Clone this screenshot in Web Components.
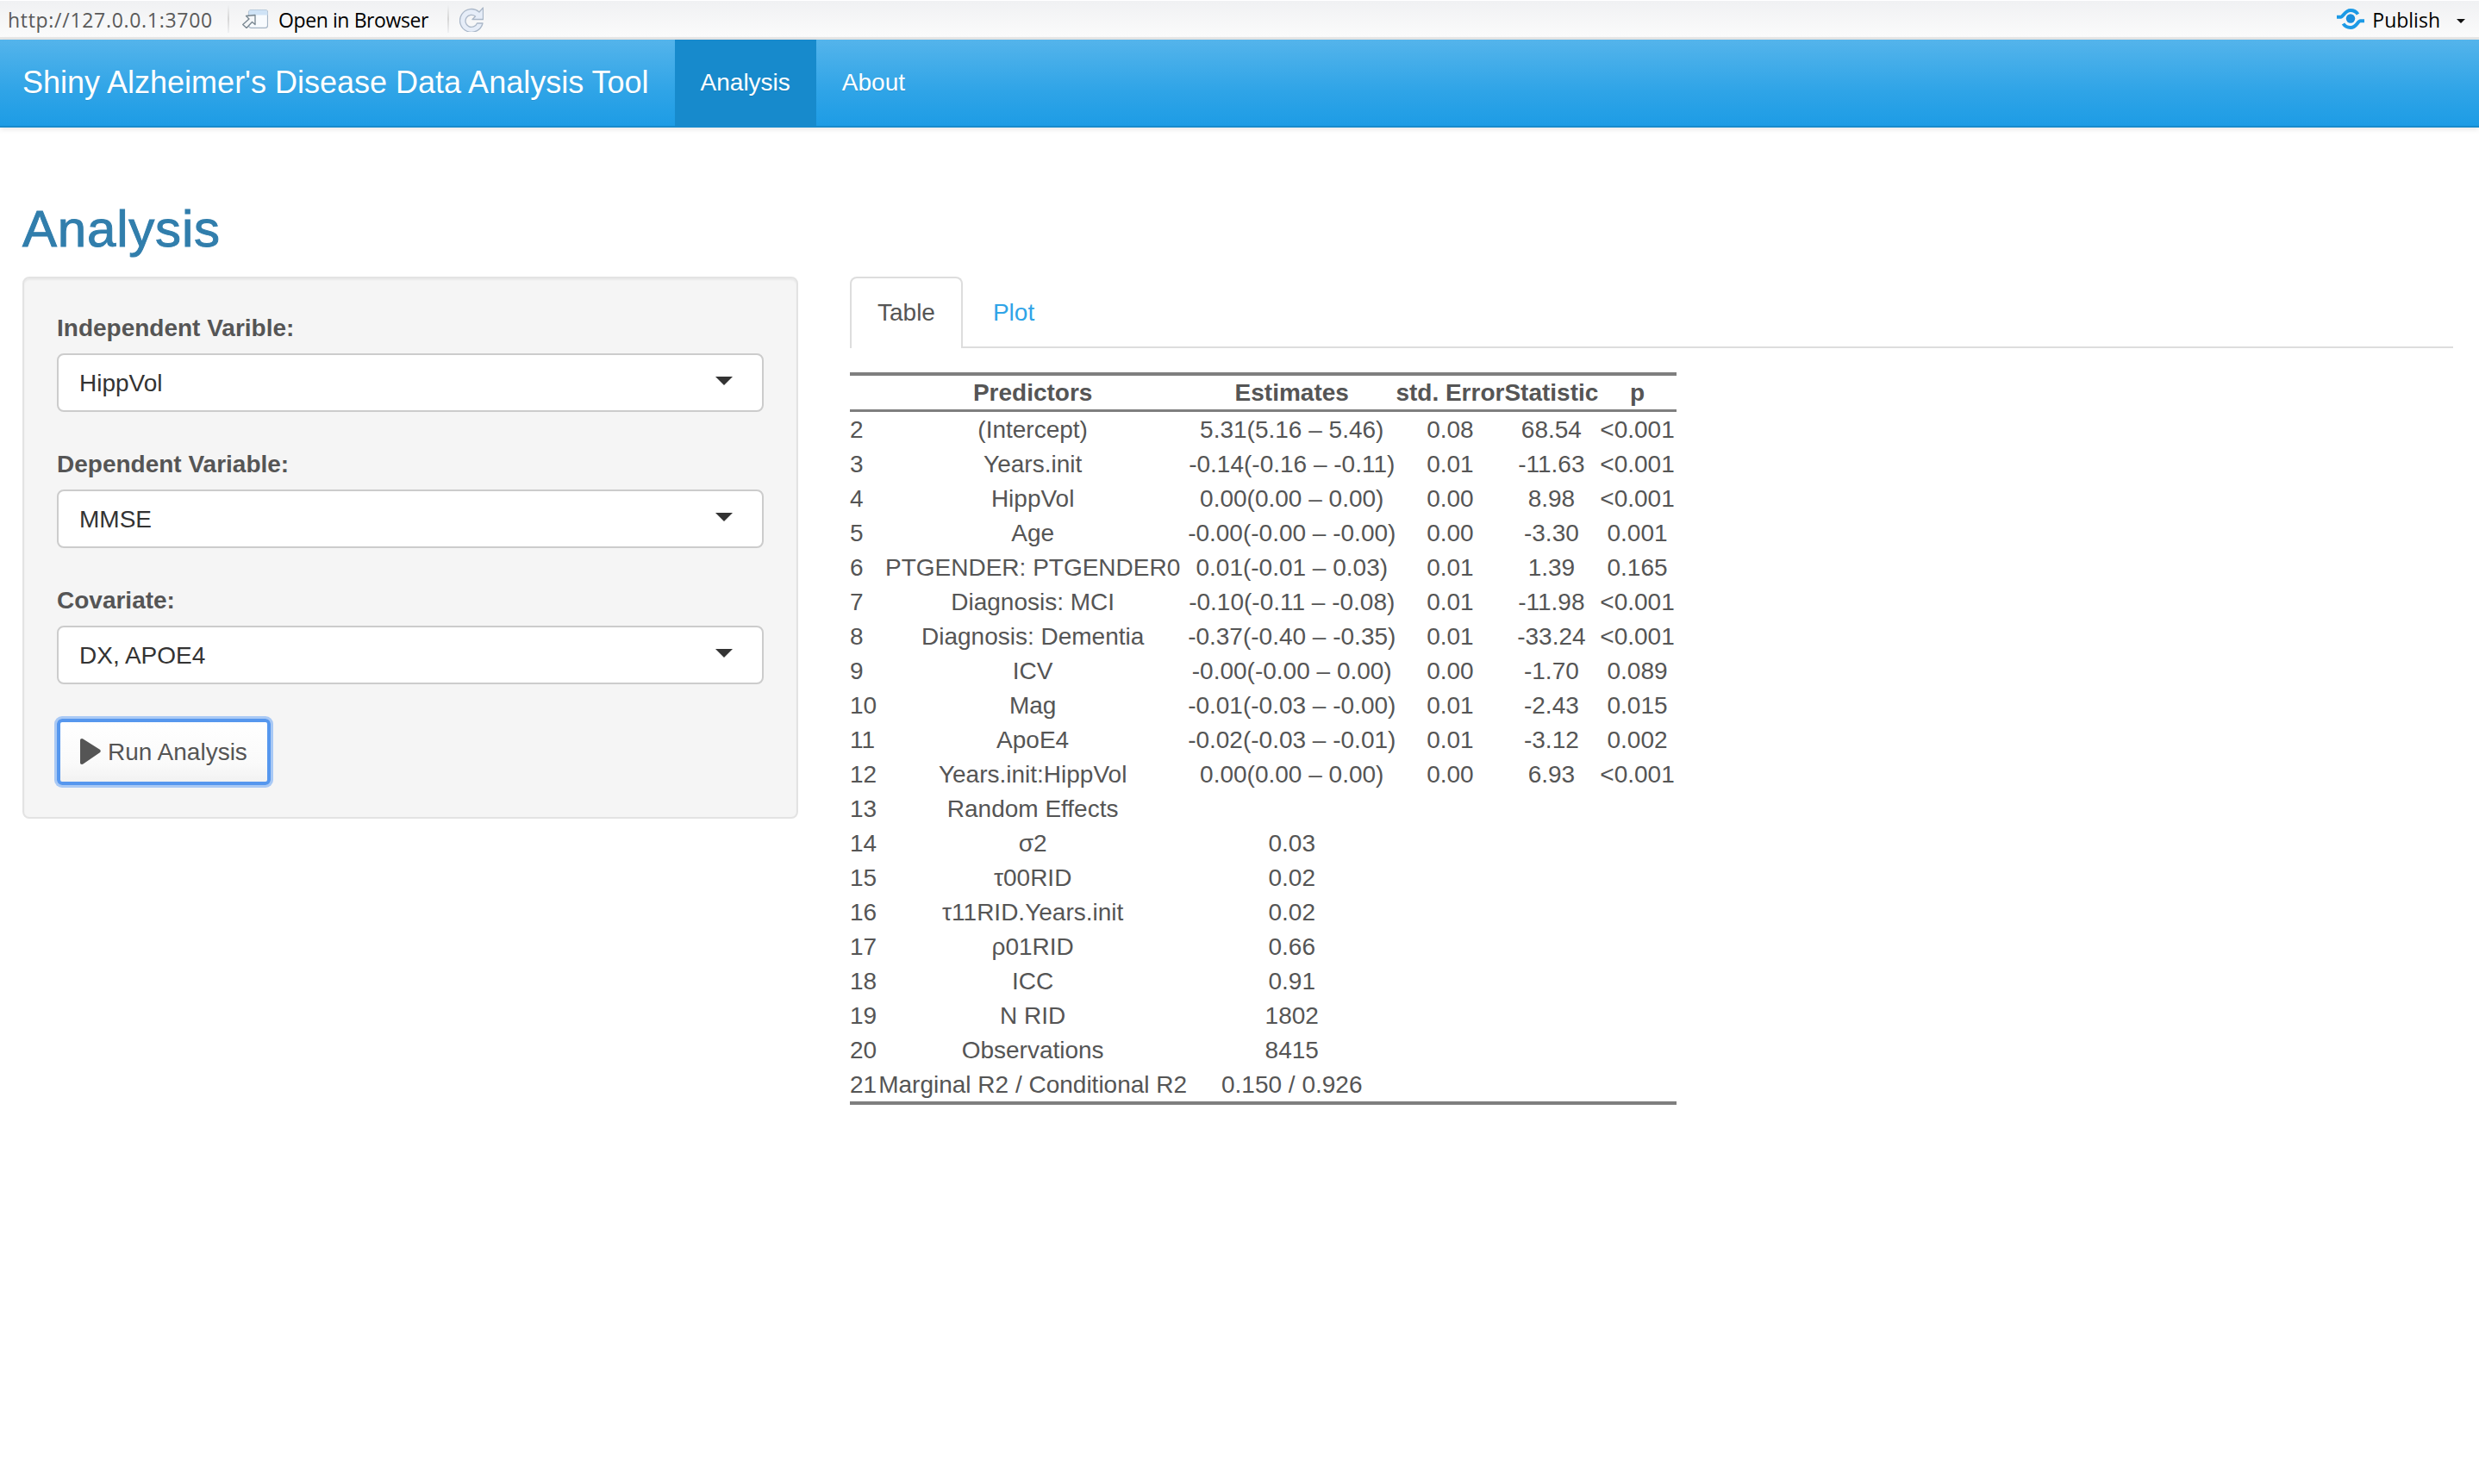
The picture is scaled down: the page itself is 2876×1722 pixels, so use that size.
<!DOCTYPE html>
<html>
<head>
<meta charset="utf-8">
<title>Shiny Alzheimer's Disease Data Analysis Tool</title>
<style>
    html, body { margin: 0; padding: 0; background: #fff; }
    body { font: 28px/40px "Liberation Sans", Arial, sans-serif; color: #555; }
</style>
</head>
<body>
<ide-toolbar url="http://127.0.0.1:3700"></ide-toolbar>
<app-navbar brand="Shiny Alzheimer's Disease Data Analysis Tool">
    <nav-item active>Analysis</nav-item>
    <nav-item>About</nav-item>
</app-navbar>
<app-page heading="Analysis">
    <well-panel slot="side">
        <select-input label="Independent Varible:" value="HippVol"></select-input>
        <select-input label="Dependent Variable:" value="MMSE"></select-input>
        <select-input label="Covariate:" value="DX, APOE4"></select-input>
        <run-button>Run Analysis</run-button>
    </well-panel>
    <tab-set slot="main" active="Table" other="Plot">
        <model-table></model-table>
    </tab-set>
</app-page>

<script>
customElements.define('ide-toolbar',
    class ideToolbar extends HTMLElement {
        constructor() {
            super()
            this.attachShadow({ mode: 'open' })
            this.shadowRoot.innerHTML = String.raw`
            <style>
                :host{
                    display: flex;
                    align-items: center;
                    height: 42px;
                    border-top: 1px solid #fff;
                    border-bottom: 3px solid #e7e7e7;
                    background: linear-gradient(#f0f1f3, #fbfbfb);
                    font: 23px/40px "Open Sans", "DejaVu Sans", sans-serif;
                    color: #000;
                }
                .url{ color: #5a5a5a; margin-left: 9px; width: 255px; padding-top: 2px; letter-spacing: .7px; }
                .sep{ width: 2px; height: 32px; background: linear-gradient(#f0f1f3, #d6d6d6, #f0f1f3); }
                .open{ display: flex; align-items: center; margin-left: 15px; width: 238px; }
                .open svg{ margin-right: 12px; }
                .open span{ padding-top: 2px; letter-spacing: -.4px; }
                .refresh{ margin-left: 12px; }
                .spacer{ flex: 1; }
                .publish{ display: flex; align-items: center; margin-right: 16px; }
                .publish svg{ margin-right: 9px; }
                .publish span:first-of-type{ padding-top: 2px; }
                .caret{ margin-left: 19px; border-style: solid; border-width: 5px 5px 0; border-color: #111 transparent transparent; margin-top: 4px; }
            </style>
            <span class="url"></span>
            <span class="sep"></span>
            <span class="open">
                <svg width="30" height="22" viewBox="0 0 30 22">
                    <rect x="7.500" y=".6" width="22" height="20.800" rx="3" fill="#f8fbfe" stroke="#a4b4c4" stroke-width="1.200"/>
                    <path d="M7.500 6.500V3.600a3 3 0 0 1 3-3h16a3 3 0 0 1 3 3v2.900z" fill="#cfe3f6"/>
                    <path d="M15 6.500 4.500 7.500 8 11 .7 17.500 5 21.500l6.500-7 3.500 3z" fill="#f4f6f8" stroke="#77858f" stroke-width="1.300" stroke-linejoin="round"/>
                </svg><span>Open in Browser</span></span>
            <span class="sep"></span>
            <span class="refresh">
                <svg width="28" height="29" viewBox="0 0 28 29" style="display:block">
                    <path d="M23 6A13.400 13.400 0 1 0 27 19H20.500A7 7 0 1 1 18.500 11L15 14.500H27.500V1z" fill="#e6edf8" stroke="#aab7c8" stroke-width="1.300" stroke-linejoin="round"/>
                </svg>
            </span>
            <span class="spacer"></span>
            <span class="publish">
                <svg width="32" height="24" viewBox="0 0 32 24">
                    <circle cx="16" cy="11.500" r="5.200" fill="#1c8fdd"/>
                    <path d="M0 9.700h4.500C8 9.700 9 2 16 2c3.500 0 6.500 1.400 8.500 4.500" fill="none" stroke="#1c9ae6" stroke-width="4"/>
                    <path d="M32 14.300h-4.500C24 14.300 23 22 16 22c-3.500 0-6.500-1.400-8.500-4.500" fill="none" stroke="#1c9ae6" stroke-width="4"/>
                </svg><span>Publish</span><span class="caret"></span></span>
            `
            this.shadowRoot.querySelector('.url').textContent = this.getAttribute('url')
        }
    })

customElements.define('nav-item',
    class navItem extends HTMLElement {
        constructor() {
            super()
            this.attachShadow({ mode: 'open' })
            this.shadowRoot.innerHTML = String.raw`
            <style>
                :host{
                    display: block;
                    padding: 30px 30px 30px;
                    line-height: 40px;
                    color: #fff;
                    text-shadow: 0 1px 0 rgba(0,0,0,.1);
                }
                :host([active]){ background: #178acc; }
            </style>
            <slot></slot>
            `
        }
    })

customElements.define('app-navbar',
    class appNavbar extends HTMLElement {
        constructor() {
            super()
            this.attachShadow({ mode: 'open' })
            this.shadowRoot.innerHTML = String.raw`
            <style>
                :host{
                    display: flex;
                    height: 100px;
                    padding-left: 26px;
                    background: linear-gradient(#54b4eb, #2fa4e7 60%, #1d9ce5);
                    border-bottom: 2px solid #178acc;
                    box-shadow: 0 2px 6px rgba(0,0,0,.1);
                    font-size: 28px;
                }
                .brand{
                    color: #fff;
                    font-size: 36px;
                    line-height: 54px;
                    padding: 23px 30px 23px 0;
                    text-shadow: 0 1px 0 rgba(0,0,0,.1);
                }
            </style>
            <span class="brand"></span>
            <slot></slot>
            `
            this.shadowRoot.querySelector('.brand').textContent = this.getAttribute('brand')
        }
    })

customElements.define('app-page',
    class appPage extends HTMLElement {
        constructor() {
            super()
            this.attachShadow({ mode: 'open' })
            this.shadowRoot.innerHTML = String.raw`
            <style>
                :host{
                    display: block;
                    padding: 0 30px 0 26px;
                }
                h2{
                    margin: 0;
                    padding-top: 82px;
                    height: 91px;
                    color: #317eac;
                    font-size: 60px;
                    line-height: 72px;
                    font-weight: 400;
                    -webkit-text-stroke: 1px #317eac;
                    letter-spacing: .8px;
                }
                .row{
                    display: grid;
                    grid-template-columns: 900px 1fr;
                    gap: 60px;
                }
            </style>
            <h2></h2>
            <div class="row">
                <slot name="side"></slot>
                <slot name="main"></slot>
            </div>
            `
            this.shadowRoot.querySelector('h2').textContent = this.getAttribute('heading')
        }
    })

customElements.define('well-panel',
    class wellPanel extends HTMLElement {
        constructor() {
            super()
            this.attachShadow({ mode: 'open' })
            this.shadowRoot.innerHTML = String.raw`
            <style>
                :host{
                    display: flex;
                    flex-direction: column;
                    align-items: flex-start;
                    align-self: start;
                    gap: 42px;
                    box-sizing: border-box;
                    width: 900px;
                    height: 629px;
                    padding: 39px 38px 0;
                    background: #f5f5f5;
                    border: 2px solid #e3e3e3;
                    border-radius: 8px;
                    box-shadow: inset 0 2px 2px rgba(0,0,0,.05);
                }
            </style>
            <slot></slot>
            `
        }
    })

customElements.define('select-input',
    class selectInput extends HTMLElement {
        constructor() {
            super()
            this.attachShadow({ mode: 'open' })
            this.shadowRoot.innerHTML = String.raw`
            <style>
                :host{ display: block; width: 820px; }
                label{
                    display: block;
                    height: 48px;
                    font-weight: 700;
                    line-height: 38px;
                    color: #555;
                }
                .box{
                    display: flex;
                    align-items: center;
                    justify-content: space-between;
                    box-sizing: border-box;
                    height: 68px;
                    padding: 0 34px 0 24px;
                    background: #fff;
                    border: 2px solid #ccc;
                    border-radius: 8px;
                    color: #333;
                }
                .value{ padding-top: 2px; }
                .caret{
                    border-style: solid;
                    border-width: 10px 10px 0;
                    border-color: #333 transparent transparent;
                    margin-top: -4px;
                }
            </style>
            <label></label>
            <div class="box"><span class="value"></span><span class="caret"></span></div>
            `
            this.shadowRoot.querySelector('label').textContent = this.getAttribute('label')
            this.shadowRoot.querySelector('.value').textContent = this.getAttribute('value')
        }
    })

customElements.define('run-button',
    class runButton extends HTMLElement {
        constructor() {
            super()
            this.attachShadow({ mode: 'open' })
            this.shadowRoot.innerHTML = String.raw`
            <style>
                :host{
                    display: flex;
                    align-items: center;
                    box-sizing: border-box;
                    width: 248px;
                    height: 77px;
                    margin-top: -2px;
                    padding: 0 20px 0 22px;
                    gap: 7px;
                    background: linear-gradient(#fff, #fafafa 70%, #f2f2f2);
                    border: 4px solid #5697ee;
                    border-radius: 6px;
                    box-shadow: 0 0 0 3px #a9c9f5;
                    color: #555;
                    text-shadow: 0 1px 1px rgba(255,255,255,.75);
                    white-space: nowrap;
                }
                svg{ flex: none; margin-top: -2px; }
            </style>
            <svg width="26" height="32" viewBox="0 0 26 32"><path d="M3 1c-1.200 0-2 .8-2 2v26c0 1.200.8 2 2 2 .6 0 1.200-.2 1.800-.7l19-13c1.300-1 1.300-2.600 0-3.600l-19-12C4.200 1.200 3.600 1 3 1z" fill="#555"/></svg>
            <slot></slot>
            `
        }
    })

customElements.define('tab-set',
    class tabSet extends HTMLElement {
        constructor() {
            super()
            this.attachShadow({ mode: 'open' })
            this.shadowRoot.innerHTML = String.raw`
            <style>
                :host{ display: block; }
                .tabs{
                    display: flex;
                    height: 81px;
                    border-bottom: 2px solid #ddd;
                }
                .tab{
                    box-sizing: border-box;
                    height: 83px;
                    padding: 20px 30px 0;
                    border: 2px solid transparent;
                    border-bottom: 0;
                }
                .on{
                    background: #fff;
                    color: #555;
                    border-color: #ddd;
                    border-radius: 8px 8px 0 0;
                }
                .off{ color: #2fa4e7; margin-left: 3px; }
                .content{ padding-top: 28px; }
            </style>
            <div class="tabs"><span class="tab on"></span><span class="tab off"></span></div>
            <div class="content"><slot></slot></div>
            `
            this.shadowRoot.querySelector('.on').textContent = this.getAttribute('active')
            this.shadowRoot.querySelector('.off').textContent = this.getAttribute('other')
        }
    })

const modelRows = [
    ['2', '(Intercept)', '5.31(5.16 – 5.46)', '0.08', '68.54', '<0.001'],
    ['3', 'Years.init', '-0.14(-0.16 – -0.11)', '0.01', '-11.63', '<0.001'],
    ['4', 'HippVol', '0.00(0.00 – 0.00)', '0.00', '8.98', '<0.001'],
    ['5', 'Age', '-0.00(-0.00 – -0.00)', '0.00', '-3.30', '0.001'],
    ['6', 'PTGENDER: PTGENDER0', '0.01(-0.01 – 0.03)', '0.01', '1.39', '0.165'],
    ['7', 'Diagnosis: MCI', '-0.10(-0.11 – -0.08)', '0.01', '-11.98', '<0.001'],
    ['8', 'Diagnosis: Dementia', '-0.37(-0.40 – -0.35)', '0.01', '-33.24', '<0.001'],
    ['9', 'ICV', '-0.00(-0.00 – 0.00)', '0.00', '-1.70', '0.089'],
    ['10', 'Mag', '-0.01(-0.03 – -0.00)', '0.01', '-2.43', '0.015'],
    ['11', 'ApoE4', '-0.02(-0.03 – -0.01)', '0.01', '-3.12', '0.002'],
    ['12', 'Years.init:HippVol', '0.00(0.00 – 0.00)', '0.00', '6.93', '<0.001'],
    ['13', 'Random Effects', '', '', '', ''],
    ['14', 'σ2', '0.03', '', '', ''],
    ['15', 'τ00RID', '0.02', '', '', ''],
    ['16', 'τ11RID.Years.init', '0.02', '', '', ''],
    ['17', 'ρ01RID', '0.66', '', '', ''],
    ['18', 'ICC', '0.91', '', '', ''],
    ['19', 'N RID', '1802', '', '', ''],
    ['20', 'Observations', '8415', '', '', ''],
    ['21', 'Marginal R2 / Conditional R2', '0.150 / 0.926', '', '', ''],
]

customElements.define('model-table',
    class modelTable extends HTMLElement {
        constructor() {
            super()
            this.attachShadow({ mode: 'open' })
            this.shadowRoot.innerHTML = String.raw`
            <style>
                :host{ display: block; }
                table{
                    border-collapse: collapse;
                    border-spacing: 0;
                    white-space: nowrap;
                    border-top: 4px solid #7f7f7f;
                    border-bottom: 4px solid #7f7f7f;
                    color: #555;
                }
                th{ padding: 0; height: 39px; line-height: 39px; font-weight: 700; border-bottom: 3px solid #7f7f7f; text-align: center; }
                td{ padding: 2px 0 0; line-height: 38px; text-align: center; }
                th:first-child, td:first-child{ text-align: left; padding-right: 1px; }
                th:nth-child(2), td:nth-child(2){ padding-left: 1px; padding-right: 1px; }
                th:last-child, td:last-child{ padding-left: 2px; padding-right: 2px; }
            </style>
            <table>
                <thead><tr><th></th><th>Predictors</th><th>Estimates</th><th>std. Error</th><th>Statistic</th><th>p</th></tr></thead>
                <tbody></tbody>
            </table>
            `
            const tbody = this.shadowRoot.querySelector('tbody')
            for (const row of modelRows) {
                const tr = document.createElement('tr')
                for (const cell of row) {
                    const td = document.createElement('td')
                    td.textContent = cell
                    tr.appendChild(td)
                }
                tbody.appendChild(tr)
            }
        }
    })
</script>
</body>
</html>
